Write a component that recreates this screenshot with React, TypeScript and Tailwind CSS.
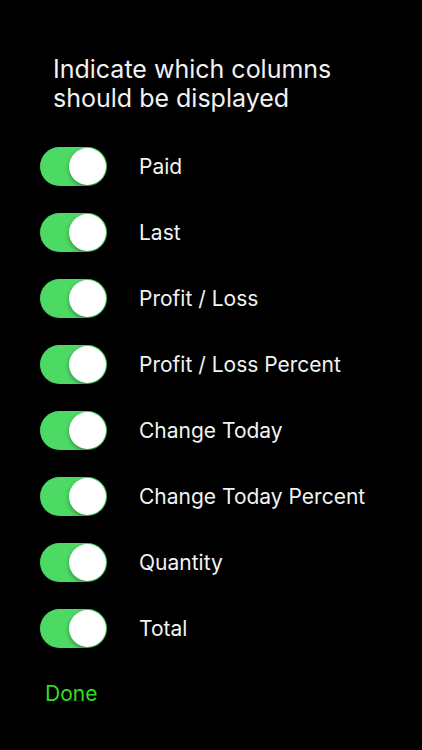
import React, { useState } from 'react';

const COLUMNS = [
  'Paid',
  'Last',
  'Profit / Loss',
  'Profit / Loss Percent',
  'Change Today',
  'Change Today Percent',
  'Quantity',
  'Total',
];

function Toggle({ on, onClick }: { on: boolean; onClick: () => void }) {
  return (
    <button
      onClick={onClick}
      className={`relative h-[39px] w-[67px] shrink-0 rounded-full ${on ? 'bg-[#4cd964]' : 'bg-[#3a3a3c]'}`}
    >
      <span
        className={`absolute top-[1px] h-[37px] w-[37px] rounded-full bg-white shadow-[0_2px_4px_rgba(0,0,0,0.35)] ${on ? 'left-[29px]' : 'left-[1px]'}`}
      />
    </button>
  );
}

export default function App() {
  const [enabled, setEnabled] = useState<boolean[]>(COLUMNS.map(() => true));

  const flip = (i: number) => setEnabled((prev) => prev.map((v, j) => (j === i ? !v : v)));

  return (
    <div className="h-[750px] w-[422px] bg-black text-white font-['Inter',sans-serif]">
      <div className="pl-[53px] pt-[55px] text-[25px] leading-[29px] text-[#f2f2f2]">
        Indicate which columns
        <br />
        should be displayed
      </div>

      <div className="mt-[34px] flex flex-col gap-[27px] pl-[40px]">
        {COLUMNS.map((label, i) => (
          <div key={label} className="flex items-center">
            <Toggle on={enabled[i]} onClick={() => flip(i)} />
            <span className="ml-[32px] text-[21px] text-[#f2f2f2]">{label}</span>
          </div>
        ))}
      </div>

      <button className="ml-[45px] mt-[30px] text-[21px] text-[#33dd22]">Done</button>
    </div>
  );
}
